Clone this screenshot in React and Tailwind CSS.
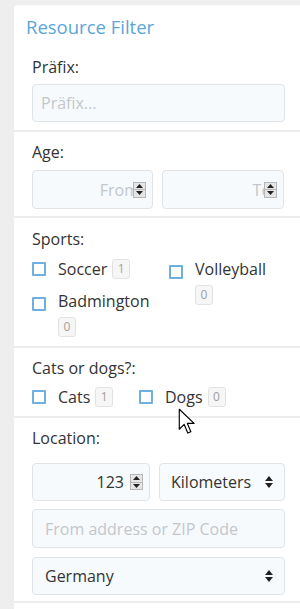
import React from 'react';

const font = { fontFamily: '"Open Sans", "Noto Sans", sans-serif' };

const Checkbox = () => (
  <span className="inline-block w-[14px] h-[14px] shrink-0 border-2 border-[#6db0e2] rounded-[1px] bg-white" />
);

const Badge = ({ n }) => (
  <span className="inline-flex items-center justify-center w-[18px] h-[20px] rounded-[3px] border border-[#e2e2e2] bg-[#f6f6f6] text-[12px] text-[#a0a0a0]">
    {n}
  </span>
);

const Spinner = () => (
  <span className="absolute right-[6px] top-1/2 -translate-y-1/2 w-[13px] h-[16px] flex flex-col border border-[#b8b8b8] bg-[#e6e6e6]">
    <span className="flex-1 flex items-center justify-center border-b border-[#b8b8b8]">
      <svg width="7" height="4" viewBox="0 0 7 4"><path d="M0 4 L3.5 0 L7 4 Z" fill="#222" /></svg>
    </span>
    <span className="flex-1 flex items-center justify-center">
      <svg width="7" height="4" viewBox="0 0 7 4"><path d="M0 0 L3.5 4 L7 0 Z" fill="#222" /></svg>
    </span>
  </span>
);

const SelectArrows = () => (
  <svg width="8" height="12" viewBox="0 0 8 12" className="absolute right-[11px] top-1/2 -translate-y-1/2">
    <path d="M0 5 L4 0 L8 5 Z" fill="#222" />
    <path d="M0 7 L4 12 L8 7 Z" fill="#222" />
  </svg>
);

const Field = ({ className = '', children }) => (
  <div className={`relative h-[38px] rounded-[4px] border border-[#e0e4e7] bg-[#f7fafc] flex items-center ${className}`}>
    {children}
  </div>
);

const Section = ({ label, children, className = '' }) => (
  <div className={`border-t-2 border-[#ededed] pl-[18px] pr-[15px] ${className}`}>
    <div className="text-[16px] leading-[22px] text-[#333]">{label}</div>
    {children}
  </div>
);

export default function App() {
  return (
    <div className="min-h-screen bg-[#eeeeee] pl-[14px] pt-[5px] overflow-hidden" style={font}>
      <div className="relative bg-white rounded-tl-[4px]">
        <div className="pl-[12px] pt-[10px] h-[40px] text-[18.5px] leading-[24px] text-[#5aa6da]">
          Resource Filter
        </div>

        <div className="pl-[18px] pr-[15px] pt-[11px] pb-[8px]">
          <div className="text-[16px] leading-[22px] text-[#333]">Präfix:</div>
          <Field className="mt-[6px] px-[8px]">
            <span className="text-[16px] text-[#c3c7cb]">Präfix...</span>
          </Field>
        </div>

        <Section label="Age:" className="pt-[9px] pb-[7px]">
          <div className="mt-[7px] flex gap-[9px]">
            <Field className="w-[121px] h-[39px]">
              <span className="w-full text-right pr-[13px] text-[16px] text-[#c3c7cb] overflow-hidden whitespace-nowrap">From</span>
              <Spinner />
            </Field>
            <Field className="w-[122px] h-[39px]">
              <span className="w-full text-right pr-[12px] text-[16px] text-[#c3c7cb] overflow-hidden whitespace-nowrap">To</span>
              <Spinner />
            </Field>
          </div>
        </Section>

        <Section label="Sports:" className="pt-[10px] pb-[9px]">
          <div className="mt-[8px] flex text-[16px] leading-[22px] text-[#333]">
            <div className="w-[137px] flex flex-col gap-[10px]">
              <div className="flex items-center gap-[12px]">
                <Checkbox />
                <span className="flex items-center gap-[5px]">Soccer <Badge n="1" /></span>
              </div>
              <div className="flex items-start gap-[12px]">
                <span className="mt-[4px]"><Checkbox /></span>
                <span className="flex flex-col items-start gap-[5px]">
                  <span>Badmington</span>
                  <Badge n="0" />
                </span>
              </div>
            </div>
            <div className="flex items-start gap-[12px]">
              <span className="mt-[4px]"><Checkbox /></span>
              <span className="flex flex-col items-start gap-[5px]">
                <span>Volleyball</span>
                <Badge n="0" />
              </span>
            </div>
          </div>
        </Section>

        <Section label="Cats or dogs?:" className="pt-[9px] pb-[8px]">
          <div className="mt-[7px] flex items-center text-[16px] leading-[22px] text-[#333]">
            <div className="w-[107px] flex items-center gap-[12px]">
              <Checkbox />
              <span className="flex items-center gap-[5px]">Cats <Badge n="1" /></span>
            </div>
            <div className="flex items-center gap-[12px]">
              <Checkbox />
              <span className="flex items-center gap-[5px]">Dogs <Badge n="0" /></span>
            </div>
          </div>
        </Section>

        <Section label="Location:" className="pt-[9px] pb-[6px]">
          <div className="mt-[14px] flex gap-[9px]">
            <Field className="w-[118px]">
              <span className="w-full text-right pr-[25px] text-[16px] text-[#333]">123</span>
              <Spinner />
            </Field>
            <Field className="flex-1 pl-[11px] bg-[#f8fbfd]">
              <span className="text-[16px] text-[#333]">Kilometers</span>
              <SelectArrows />
            </Field>
          </div>
          <Field className="mt-[8px] h-[39px] px-[12px]">
            <span className="text-[16px] text-[#c3c7cb] whitespace-nowrap">From address or ZIP Code</span>
          </Field>
          <Field className="mt-[9px] px-[12px]">
            <span className="text-[16px] text-[#333]">Germany</span>
            <SelectArrows />
          </Field>
        </Section>
        <div className="border-t-2 border-[#ededed] h-[10px]" />

        <svg width="18" height="27" viewBox="0 0 14 21" className="absolute left-[164px] top-[403px]">
          <path d="M1 1 L1 16.5 L4.8 12.8 L7.6 19.5 L10 18.5 L7.3 12 L12.5 12 Z" fill="#fff" stroke="#000" strokeWidth="0.9" strokeLinejoin="round" />
        </svg>
      </div>
    </div>
  );
}
